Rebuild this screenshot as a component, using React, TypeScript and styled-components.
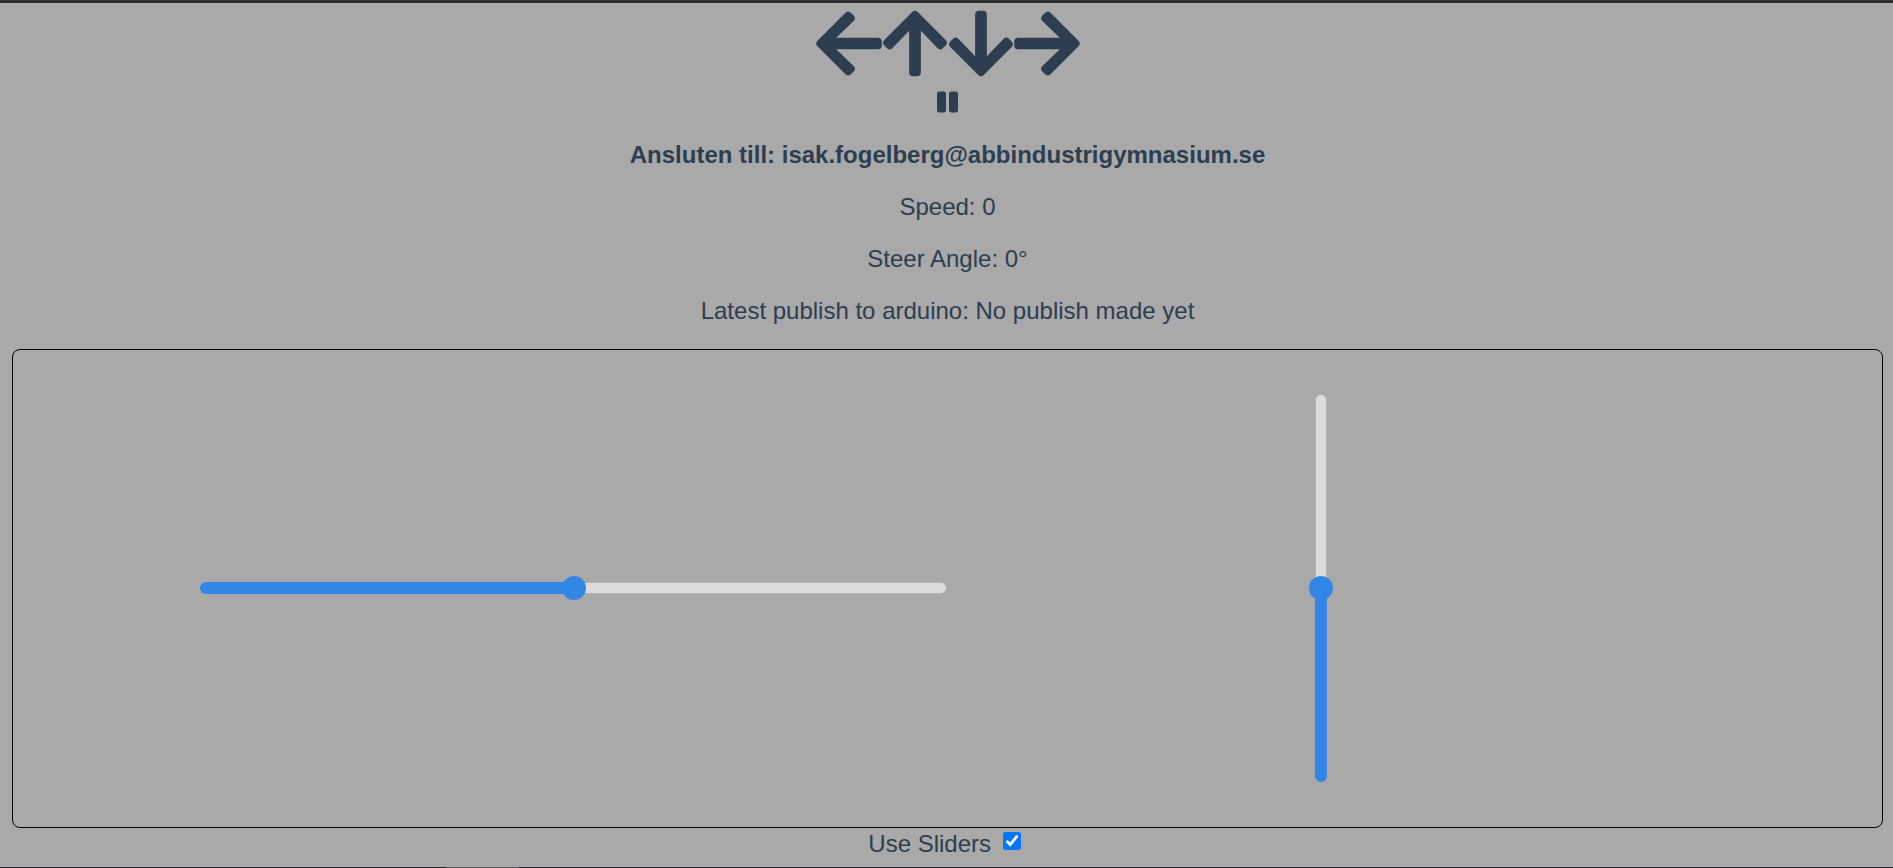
import React, { useState } from "react";
import styled, { createGlobalStyle } from "styled-components";
import { FaArrowDown, FaArrowLeft, FaArrowRight, FaArrowUp, FaPause } from "react-icons/fa";

const GlobalStyle = createGlobalStyle`
  * {
    box-sizing: border-box;
  }
  body {
    margin: 0;
    background: #a9a9a9;
    color: #2c3e50;
    font: 24px/28px "Liberation Sans", Arial, sans-serif;
  }
`;

const Page = styled.div`
  display: flex;
  flex-direction: column;
  min-height: 100vh;
`;

const Content = styled.main`
  flex: 1;
  display: flex;
  flex-direction: column;
  padding: 0 10px 0 12px;
  text-align: center;
`;

const TopEdge = styled.div`
  height: 3px;
  background: #2b2b2b;
  border-top: 1px solid #37383b;
`;

const Controls = styled.div`
  display: flex;
  justify-content: center;
  padding-top: 3px;
`;

const IconButton = styled.button<{ $width: number; $height: number }>`
  display: flex;
  padding: 0;
  border: 0;
  background: none;
  color: inherit;
  cursor: pointer;

  svg {
    display: block;
    width: ${({ $width }) => $width}px;
    height: ${({ $height }) => $height}px;
  }
`;

const ArrowButton = styled(IconButton).attrs({ $width: 66, $height: 75 })``;

const PauseRow = styled(Controls)`
  padding: 9px 0 3px;
`;

const Status = styled.p<{ $strong?: boolean }>`
  margin: 24px 0 0;
  font-weight: ${({ $strong }) => ($strong ? 700 : 400)};
`;

const SliderPanel = styled.section`
  flex: 1;
  display: grid;
  grid-template-columns: 10% 40% 10% 20%;
  align-items: center;
  min-height: 300px;
  margin-top: 24px;
  padding-bottom: 2px;
  border: 1px solid #000;
  border-radius: 8px;
`;

const Slider = styled.input<{ $vertical?: boolean }>`
  --fill: 50%;
  appearance: none;
  grid-column: ${({ $vertical }) => ($vertical ? 4 : 2)};
  justify-self: ${({ $vertical }) => ($vertical ? "center" : "stretch")};
  writing-mode: ${({ $vertical }) => ($vertical ? "vertical-lr" : "horizontal-tb")};
  direction: ${({ $vertical }) => ($vertical ? "rtl" : "ltr")};
  inline-size: ${({ $vertical }) => ($vertical ? "388px" : "100%")};
  block-size: 12px;
  margin: 0;
  border: 1px solid transparent;
  border-radius: 6px;
  background:
    linear-gradient(#3286e6, #3286e6) left bottom /
      ${({ $vertical }) => ($vertical ? "100% var(--fill)" : "var(--fill) 100%")} no-repeat border-box,
    linear-gradient(#dbdbdb, #dbdbdb) padding-box,
    linear-gradient(#b4b4b4, #b4b4b4) border-box;
  cursor: pointer;

  &::-webkit-slider-thumb {
    appearance: none;
    width: 24px;
    height: 24px;
    border-radius: 50%;
    background: #3286e6;
  }
`;

const Toggle = styled.label`
  align-self: center;
  padding: 2px 0 9px;
`;

const Checkbox = styled.input`
  width: 18px;
  height: 18px;
  margin: 0 6px 0 5px;
  vertical-align: 2px;
  accent-color: #0075ff;
`;

const BottomEdge = styled.div`
  height: 1px;
  padding-left: 446px;
  background: #24242c;
`;

const EdgeHighlight = styled.div`
  width: 73px;
  height: 1px;
  background: #56565a;
`;

type RangeProps = {
  label: string;
  value: number;
  onChange: (value: number) => void;
  vertical?: boolean;
};

function Range({ label, value, onChange, vertical }: RangeProps) {
  return (
    <Slider
      type="range"
      aria-label={label}
      min={-100}
      max={100}
      value={value}
      $vertical={vertical}
      style={{ "--fill": `${(value + 100) / 2}%` } as React.CSSProperties}
      onChange={(e) => onChange(Number(e.target.value))}
    />
  );
}

const clamp = (n: number) => Math.max(-100, Math.min(100, n));

export default function App() {
  const [speed, setSpeed] = useState(0);
  const [angle, setAngle] = useState(0);
  const [useSliders, setUseSliders] = useState(true);

  const stop = () => {
    setSpeed(0);
    setAngle(0);
  };

  return (
    <Page>
      <GlobalStyle />
      <TopEdge />
      <Content>
        <Controls>
          <ArrowButton aria-label="Left" onClick={() => setAngle(clamp(angle - 10))}>
            <FaArrowLeft />
          </ArrowButton>
          <ArrowButton aria-label="Forward" onClick={() => setSpeed(clamp(speed + 10))}>
            <FaArrowUp />
          </ArrowButton>
          <ArrowButton aria-label="Backward" onClick={() => setSpeed(clamp(speed - 10))}>
            <FaArrowDown />
          </ArrowButton>
          <ArrowButton aria-label="Right" onClick={() => setAngle(clamp(angle + 10))}>
            <FaArrowRight />
          </ArrowButton>
        </Controls>
        <PauseRow>
          <IconButton $width={21} $height={24} aria-label="Stop" onClick={stop}>
            <FaPause />
          </IconButton>
        </PauseRow>
        <Status $strong>Ansluten till: isak.fogelberg@abbindustrigymnasium.se</Status>
        <Status>Speed: {speed}</Status>
        <Status>Steer Angle: {angle}°</Status>
        <Status>Latest publish to arduino: No publish made yet</Status>
        <SliderPanel>
          {useSliders && (
            <>
              <Range label="Steer angle" value={angle} onChange={setAngle} />
              <Range label="Speed" value={speed} onChange={setSpeed} vertical />
            </>
          )}
        </SliderPanel>
        <Toggle>
          Use Sliders{" "}
          <Checkbox
            type="checkbox"
            checked={useSliders}
            onChange={(e) => setUseSliders(e.target.checked)}
          />
        </Toggle>
      </Content>
      <BottomEdge>
        <EdgeHighlight />
      </BottomEdge>
    </Page>
  );
}
